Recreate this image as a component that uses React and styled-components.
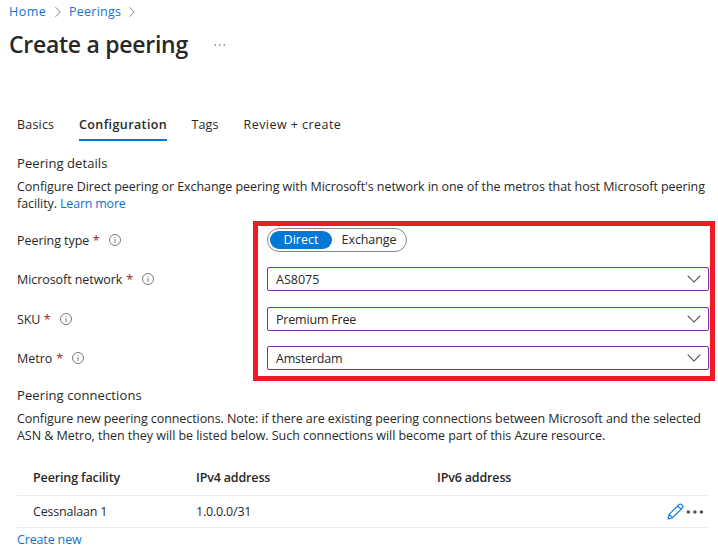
import React from 'react';
import styled, { createGlobalStyle } from 'styled-components';

const Global = createGlobalStyle`
  * { box-sizing: border-box; }
  html, body { margin: 0; background: #fff; }
  body {
    font-family: "Open Sans", "Noto Sans", sans-serif;
    font-size: 12.5px;
    line-height: 17px;
    color: #292827;
    overflow: hidden;
  }
`;

const Page = styled.main`
  width: 718px;
  height: 550px;
  overflow: hidden;
  display: flex;
  flex-direction: column;
`;

/* Text run with adjustable tracking */
const Text = styled.span`
  white-space: pre;
  letter-spacing: ${(p) => p.$track || 0}px;
`;

const Link = styled.a`
  color: #0f74cf;
  white-space: pre;
  text-decoration: none;
  cursor: pointer;
  letter-spacing: ${(p) => p.$track || 0}px;
`;

const Breadcrumb = styled.nav`
  display: grid;
  grid-template-columns: 46px 14px 60px 14px;
  align-items: center;
  height: 24px;
  padding-left: 9px;

  ${Link} { padding-bottom: 2px; }
`;

const TitleRow = styled.header`
  display: grid;
  grid-template-columns: 205px 14px;
  align-items: center;
  height: 42px;
  padding-left: 9px;
`;

const Title = styled.h1`
  margin: -2px 0 0;
  font-size: 23px;
  line-height: 32px;
  font-weight: 600;
  white-space: pre;
  letter-spacing: ${(p) => p.$track}px;
`;

const Tabs = styled.div`
  display: flex;
  margin: 42px 0 0 17px;
  height: 33px;
`;

const Tab = styled.div`
  width: ${(p) => p.$w}px;
  margin-right: ${(p) => p.$gap}px;
  padding-top: 8px;
  border-bottom: 2px solid ${(p) => (p.$active ? '#0078d4' : 'transparent')};
  font-weight: ${(p) => (p.$active ? 600 : 400)};
`;

const Heading = styled.h2`
  margin: ${(p) => p.$top}px 0 0 17px;
  font-size: 13px;
  font-weight: 400;
  line-height: 18px;
`;

const Paragraph = styled.p`
  display: flex;
  flex-direction: column;
  margin: 6px 0 0 17px;
`;

const Form = styled.section`
  display: grid;
  grid-template-columns: 236px 462px;
  margin: 9px 0 0 17px;
  height: 160px;
`;

const Labels = styled.div`
  display: grid;
  grid-template-rows: 39px 40px 39px 24px;
  padding-top: 7px;
`;

const Label = styled.label`
  display: flex;
  align-items: center;
  height: 24px;
`;

const Required = styled.span`
  width: 7px;
  margin: 0 9px 0 ${(p) => p.$gap}px;
  color: #a4262c;
`;

const Highlight = styled.div`
  border: 5px solid #ed1c24;
  padding: 2px 1px 0 9px;
  display: grid;
  grid-template-rows: 39px 40px 39px 24px;
`;

const Toggle = styled.div`
  display: flex;
  width: 140px;
  height: 24px;
  padding: 2px;
  border: 1px solid #8a8886;
  border-radius: 12px;
`;

const Option = styled.button`
  flex: none;
  width: ${(p) => p.$w}px;
  height: 18px;
  padding: 0;
  border: 0;
  border-radius: 9px;
  background: ${(p) => (p.$on ? '#0078d4' : 'transparent')};
  color: ${(p) => (p.$on ? '#fff' : '#292827')};
  font: inherit;
  line-height: 18px;
`;

const Select = styled.div`
  display: flex;
  align-items: center;
  justify-content: space-between;
  width: 442px;
  height: 24px;
  padding: 0 7px 0 8px;
  border: 1px solid #8a2da5;
  border-radius: 2px;
`;

const Table = styled.div`
  width: 692px;
  margin: 15px 0 0 17px;
`;

const Row = styled.div`
  display: grid;
  grid-template-columns: 163px 241px 230px 1fr;
  align-items: center;
  height: ${(p) => p.$h}px;
  padding-left: 16px;
  border-bottom: 1px solid #edebe9;
  font-weight: ${(p) => (p.$head ? 600 : 400)};
`;

const Actions = styled.div`
  display: flex;
  align-items: center;
  gap: 2px;
`;

const Footer = styled.div`
  margin: 3px 0 0 17px;
`;

const Crumb = () => (
  <svg width="6" height="12" viewBox="0 0 6 12" fill="none" stroke="#797775" strokeWidth="0.9">
    <path d="M.5 1.2 5.3 6 .5 10.8" />
  </svg>
);

const Dots = () => (
  <svg width="12" height="4" viewBox="0 0 12 4" fill="#605e5c">
    <circle cx="1.3" cy="2" r=".8" /><circle cx="5.8" cy="2" r=".8" /><circle cx="10.3" cy="2" r=".8" />
  </svg>
);

const Info = () => (
  <svg width="12" height="12" viewBox="0 0 12 12" fill="none" stroke="#6b6967">
    <circle cx="6" cy="6" r="5.5" strokeWidth=".9" />
    <path d="M6 5v4M6 3v1" strokeWidth=".9" />
  </svg>
);

const Chevron = () => (
  <svg width="14" height="8" viewBox="0 0 14 8" fill="none" stroke="#484644" strokeWidth="1.05">
    <path d="M.7.7 7 7 13.3.7" />
  </svg>
);

const Pencil = () => (
  <svg width="17" height="17" viewBox="0 0 17 17" fill="none" stroke="#0f78d4" strokeWidth="1.15" strokeLinejoin="round">
    <path d="M1 16 2.2 11.3 11.9 1.6a2 2 0 0 1 2.9 0l.5.5a2 2 0 0 1 0 2.9L5.6 14.7ZM10.6 2.9 14 6.3M2.2 11.3 5.6 14.7" />
  </svg>
);

const More = () => (
  <svg width="18" height="6" viewBox="0 0 18 6" fill="#555351">
    <circle cx="2.3" cy="3" r="1.8" /><circle cx="8.9" cy="3" r="1.8" /><circle cx="15.4" cy="3" r="1.8" />
  </svg>
);

const fields = [
  { label: 'Peering type', track: -0.06, gap: 3.5 },
  { label: 'Microsoft network', track: -0.07, gap: 4 },
  { label: 'SKU', track: -0.15, gap: 3.5 },
  { label: 'Metro', track: 0, gap: 4 },
];

const selects = [
  { value: 'AS8075', track: 0 },
  { value: 'Premium Free', track: -0.19 },
  { value: 'Amsterdam', track: -0.2 },
];

export default function App() {
  return (
    <Page>
      <Global />
      <Breadcrumb>
        <Link $track={0.5}>Home</Link>
        <Crumb />
        <Link $track={0.25}>Peerings</Link>
        <Crumb />
      </Breadcrumb>
      <TitleRow>
        <Title $track={-0.27}>Create a peering</Title>
        <Dots />
      </TitleRow>
      <Tabs>
        <Tab $w={37} $gap={25}><Text $track={0.2}>Basics</Text></Tab>
        <Tab $w={88} $gap={24.5} $active><Text $track={0.4}>Configuration</Text></Tab>
        <Tab $w={27} $gap={25}><Text $track={0.1}>Tags</Text></Tab>
        <Tab $w={100} $gap={0}><Text $track={0.45}>Review + create</Text></Tab>
      </Tabs>
      <Heading $top={13}><Text $track={0.08}>Peering details</Text></Heading>
      <Paragraph>
        <Text $track={-0.06}>Configure Direct peering or Exchange peering with Microsoft's network in one of the metros that host Microsoft peering</Text>
        <Text $track={-0.08}>facility. <Link $track={-0.22}>Learn more</Link></Text>
      </Paragraph>
      <Form>
        <Labels>
          {fields.map((f) => (
            <Label key={f.label}>
              <Text $track={f.track}>{f.label}</Text>
              <Required $gap={f.gap}>*</Required>
              <Info />
            </Label>
          ))}
        </Labels>
        <Highlight>
          <Toggle>
            <Option $w={62} $on><Text>Direct</Text></Option>
            <Option $w={74}><Text $track={-0.1}>Exchange</Text></Option>
          </Toggle>
          {selects.map((s) => (
            <Select key={s.value}>
              <Text $track={s.track}>{s.value}</Text>
              <Chevron />
            </Select>
          ))}
        </Highlight>
      </Form>
      <Heading $top={5}><Text $track={0.1}>Peering connections</Text></Heading>
      <Paragraph>
        <Text $track={-0.077}>Configure new peering connections. Note: if there are existing peering connections between Microsoft and the selected</Text>
        <Text $track={-0.045}>{'ASN & Metro, then they will be listed below. Such connections will become part of this Azure resource.'}</Text>
      </Paragraph>
      <Table>
        <Row $h={37} $head>
          <Text $track={-0.13}>Peering facility</Text>
          <Text $track={-0.16}>IPv4 address</Text>
          <Text $track={-0.16}>IPv6 address</Text>
        </Row>
        <Row $h={32}>
          <Text $track={-0.2}>Cessnalaan 1</Text>
          <Text $track={-0.2}>1.0.0.0/31</Text>
          <span />
          <Actions><Pencil /><More /></Actions>
        </Row>
      </Table>
      <Footer><Link $track={-0.15}>Create new</Link></Footer>
    </Page>
  );
}
